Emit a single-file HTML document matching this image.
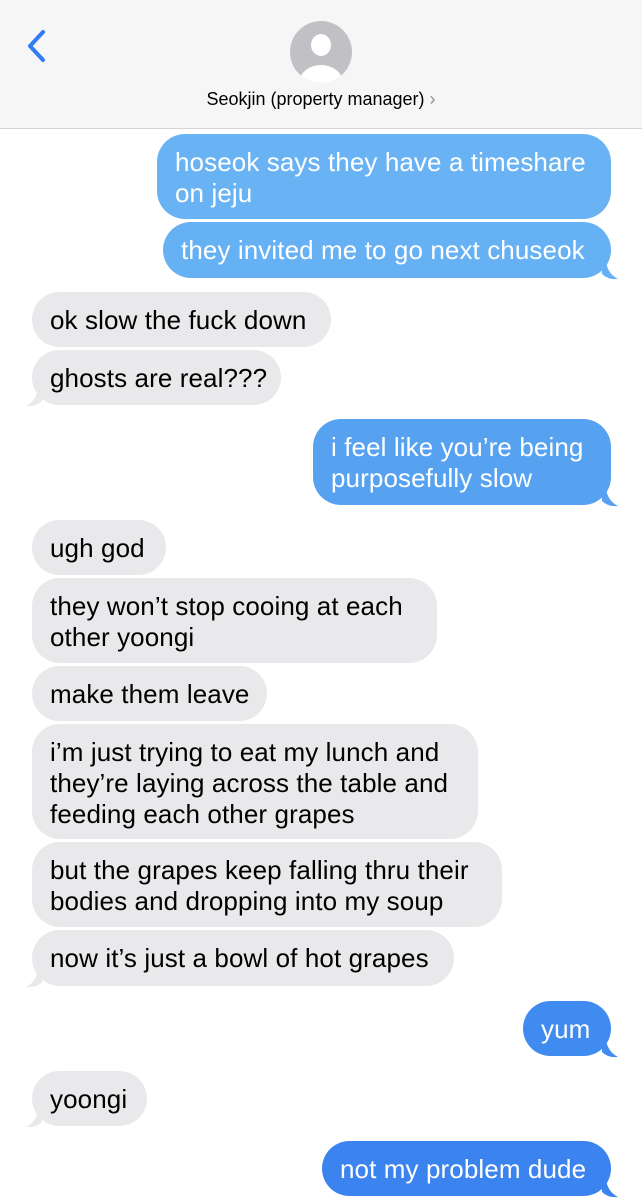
<!DOCTYPE html>
<html><head><meta charset="utf-8"><style>
body{margin:0;width:642px;height:1200px;background:#fff;position:relative;overflow:hidden;font-family:"Liberation Sans",Arial,sans-serif}
.hdr{position:absolute;left:0;top:0;width:642px;height:128px;background:#f6f6f7;border-bottom:1px solid #d4d4d6}
.b{position:absolute;border-radius:28px;font-size:26px;line-height:31px;padding:13px 0 12px 18px;box-sizing:border-box;letter-spacing:0.1px;white-space:nowrap}
.o{color:#fff}
.i{background:#e9e9eb;color:#000}
.t{position:absolute;width:20px;height:20px}
</style></head><body>
<div class="hdr">
<svg style="position:absolute;left:24px;top:28px" width="24" height="36" viewBox="0 0 24 36"><path d="M19 4 L6 18 L19 32" fill="none" stroke="#2f7cf6" stroke-width="4" stroke-linecap="round" stroke-linejoin="round"/></svg>
<svg style="position:absolute;left:290px;top:21px" width="62" height="62" viewBox="0 0 62 62"><defs><clipPath id="c"><circle cx="31" cy="31" r="31"/></clipPath></defs><circle cx="31" cy="31" r="31" fill="#c1c1c5"/><g clip-path="url(#c)" fill="#fff"><ellipse cx="31" cy="24" rx="10" ry="11"/><ellipse cx="31" cy="62" rx="22" ry="18"/></g></svg>
<div style="position:absolute;left:0;width:642px;top:89px;text-align:center;font-size:18px;color:#000">Seokjin (property manager) <span style="color:#8e8e93">&#8250;</span></div>
</div>

<div class="b o" style="left:157px;top:134px;width:454px;height:85px;background:#69b3f4">hoseok says they have a timeshare<br>on jeju</div>
<div class="b o" style="left:163px;top:222px;width:448px;height:56px;background:#66b0f4">they invited me to go next chuseok</div>
<svg class="t" style="left:602px;top:262px" viewBox="0 0 20 20"><path d="M0 0 L4 0 Q6 12 16 17 Q6 18 0 12Z" fill="#66b0f4"/></svg>

<div class="b i" style="left:32px;top:292px;width:299px;height:55px">ok slow the fuck down</div>
<div class="b i" style="left:32px;top:350px;width:249px;height:55px">ghosts are real???</div>
<svg class="t" style="left:22px;top:389px" viewBox="0 0 20 20"><path d="M20 0 L16 0 Q14 12 4 17 Q14 18 20 12Z" fill="#e9e9eb"/></svg>

<div class="b o" style="left:313px;top:419px;width:298px;height:86px;background:#56a2f1">i feel like you’re being<br>purposefully slow</div>
<svg class="t" style="left:602px;top:489px" viewBox="0 0 20 20"><path d="M0 0 L4 0 Q6 12 16 17 Q6 18 0 12Z" fill="#56a2f1"/></svg>

<div class="b i" style="left:32px;top:520px;width:134px;height:55px">ugh god</div>
<div class="b i" style="left:32px;top:578px;width:405px;height:85px">they won’t stop cooing at each<br>other yoongi</div>
<div class="b i" style="left:32px;top:666px;width:235px;height:55px">make them leave</div>
<div class="b i" style="left:32px;top:724px;width:446px;height:115px">i’m just trying to eat my lunch and<br>they’re laying across the table and<br>feeding each other grapes</div>
<div class="b i" style="left:32px;top:842px;width:470px;height:85px">but the grapes keep falling thru their<br>bodies and dropping into my soup</div>
<div class="b i" style="left:32px;top:930px;width:422px;height:56px">now it’s just a bowl of hot grapes</div>
<svg class="t" style="left:22px;top:970px" viewBox="0 0 20 20"><path d="M20 0 L16 0 Q14 12 4 17 Q14 18 20 12Z" fill="#e9e9eb"/></svg>

<div class="b o" style="left:523px;top:1001px;width:88px;height:55px;background:#3f8bf0">yum</div>
<svg class="t" style="left:602px;top:1040px" viewBox="0 0 20 20"><path d="M0 0 L4 0 Q6 12 16 17 Q6 18 0 12Z" fill="#3f8bf0"/></svg>

<div class="b i" style="left:32px;top:1071px;width:115px;height:55px">yoongi</div>
<svg class="t" style="left:22px;top:1110px" viewBox="0 0 20 20"><path d="M20 0 L16 0 Q14 12 4 17 Q14 18 20 12Z" fill="#e9e9eb"/></svg>

<div class="b o" style="left:322px;top:1141px;width:289px;height:55px;background:#3b84ef">not my problem dude</div>
<svg class="t" style="left:602px;top:1180px" viewBox="0 0 20 20"><path d="M0 0 L4 0 Q6 12 16 17 Q6 18 0 12Z" fill="#3b84ef"/></svg>
</body></html>
